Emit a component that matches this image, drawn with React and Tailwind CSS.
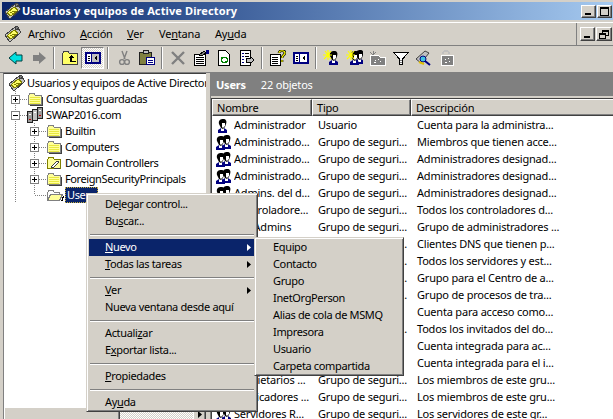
import React from 'react';

const U = ({ children }) => <span className="underline underline-offset-1">{children}</span>;

// ---- small drawn icons ----
const MmcIcon = () => (
  <svg width="18" height="16" viewBox="0 0 18 16" shapeRendering="crispEdges">
    <polygon points="1,9 11,1 13,1 17,6 7,15 5,15" fill="#c0c0c0" stroke="#404040" />
    <polygon points="3,10 10,4 14,7 7,13" fill="#ffff66" stroke="#808000" />
    <path d="M6 9h2M8 8h3M8 10h3" stroke="#808000" />
    <polygon points="11,1 13,0 15,2 12,4" fill="#808080" stroke="#404040" />
  </svg>
);

const Folder = () => (
  <svg width="16" height="14" viewBox="0 0 16 14" shapeRendering="crispEdges">
    <path d="M1.5 3.5 L3 1.5 H7 L8.5 3.5 H14.5 V12.5 H1.5 Z" fill="#ffff99" stroke="#808080" />
    <path d="M3 5h10M3 7h10M3 9h10M3 11h10" stroke="#e8e840" />
    <path d="M15.5 4.5 V13.5 H2.5" stroke="#404040" fill="none" />
  </svg>
);

const OuFolder = () => (
  <svg width="16" height="14" viewBox="0 0 16 14" shapeRendering="crispEdges">
    <path d="M1.5 3.5 L3 1.5 H7 L8.5 3.5 H14.5 V12.5 H1.5 Z" fill="#ffff99" stroke="#808000" />
    <path d="M5 11 L11 5 L13 6 L7 12 Z" fill="#ffffff" stroke="#404040" />
    <path d="M8 12h6" stroke="#404040" />
  </svg>
);

const OpenFolder = () => (
  <svg width="19" height="15" viewBox="0 0 19 15" shapeRendering="crispEdges">
    <path d="M1.5 4.5 L3 2.5 H7 L8.5 4.5 H13.5 V12.5 H1.5 Z" fill="#ffffff" stroke="#808080" />
    <path d="M1.5 12.5 L4.5 6.5 H16.5 L13.5 12.5 Z" fill="#ffff99" stroke="#808080" />
    <path d="M15 13 L17 8 L18 9 L16 14 Z" fill="#000000" />
  </svg>
);

const Domain = () => (
  <svg width="17" height="16" viewBox="0 0 17 16" shapeRendering="crispEdges">
    <rect x="10.5" y="0.5" width="5" height="11" fill="#9a9a9a" stroke="#202020" />
    <rect x="5.5" y="2.5" width="5" height="11" fill="#c0c0c0" stroke="#202020" />
    <rect x="0.5" y="4.5" width="5" height="11" fill="#9a9a9a" stroke="#202020" />
    <path d="M7 5h2M2 7h2M12 3h2" stroke="#ffffff" />
    <path d="M2 12h2M12 8h2" stroke="#c00000" />
  </svg>
);

const Head = () => (
  <g>
    <path d="M3 12 L6 10 H9 L12 12 V15 H3 Z" fill="#000080" />
    <path d="M6 10 H9 V13 H6 Z" fill="#ffffff" />
    <path d="M4 6 C3 2 6 1 8 1 C11 1 12 3 11 6 L10 9 L8 11 L6 10 Z" fill="#000000" />
    <path d="M7 5 H10 V8 L8 10 L7 9 Z" fill="#ffffff" />
  </g>
);

const UserIcon = () => (
  <svg width="16" height="16" viewBox="0 0 16 16">
    <Head />
  </svg>
);

const GroupIcon = () => (
  <svg width="17" height="16" viewBox="0 0 17 16">
    <g transform="translate(5 -1)"><Head /></g>
    <g transform="translate(-1 0)"><Head /></g>
  </svg>
);

const Star = () => (
  <path d="M2 1 L5 5 M8 1 L5 5 M0 5 H9 M1 9 L5 5 M8 9 L5 5 M5 0 V10" stroke="#ffff00" strokeWidth="1.2" />
);

const Expander = ({ minus }) => (
  <svg width="9" height="9" viewBox="0 0 9 9" shapeRendering="crispEdges" className="absolute left-[3px] top-[4px]">
    <rect x="0.5" y="0.5" width="8" height="8" fill="#ffffff" stroke="#808080" />
    <path d="M2 4.5h5" stroke="#000000" />
    {!minus && <path d="M4.5 2v5" stroke="#000000" />}
  </svg>
);

// connector cell: a branch of the dotted tree lines
const Branch = ({ box, minus, last }) => (
  <div className="relative h-4 w-[19px] shrink-0">
    <svg width="19" height="16" className="absolute left-0 top-0" shapeRendering="crispEdges">
      <path d={last ? 'M7.5 0V8M7.5 8.5H19' : 'M7.5 0V16M7.5 8.5H19'} stroke="#808080" strokeDasharray="1 1" />
    </svg>
    {box && <Expander minus={minus} />}
  </div>
);

const TreeRow = ({ indent, box, minus, last, icon, children, selected }) => (
  <div className="flex h-4 items-center whitespace-nowrap">
    {indent && (
      <div className="relative h-4 w-[19px] shrink-0">
        <svg width="19" height="16" className="absolute left-0 top-0" shapeRendering="crispEdges">
          <path d="M7.5 0V16" stroke="#808080" strokeDasharray="1 1" />
        </svg>
      </div>
    )}
    <Branch box={box} minus={minus} last={last} />
    <div className="flex w-[19px] shrink-0 items-center">{icon}</div>
    {selected ? (
      <span className="h-4 w-[33px] border border-dotted border-[#c8b040] bg-[#0a246a] pl-px leading-[14px] text-white">{children}</span>
    ) : (
      <span>{children}</span>
    )}
  </div>
);

// ---- toolbar ----
const Tool = ({ children, pressed }) => (
  <div
    className={
      pressed
        ? 'flex h-[22px] w-[23px] items-center justify-center border border-t-[#808080] border-l-[#808080] border-r-white border-b-white bg-[repeating-conic-gradient(#ffffff_0_25%,#d4d0c8_0_50%)] bg-[length:2px_2px]'
        : 'flex h-[22px] w-[23px] items-center justify-center'
    }
  >
    {children}
  </div>
);

const ToolSep = () => (
  <div className="flex h-[22px] w-2 justify-center">
    <div className="h-full w-0.5 border-l border-r border-l-[#808080] border-r-white" />
  </div>
);

const svgProps = { width: 16, height: 16, viewBox: '0 0 16 16', shapeRendering: 'crispEdges' };

const PanelIcon = ({ white }) => (
  <svg {...svgProps} width="18" viewBox="0 0 18 16">
    <rect x="1" y="2" width="16" height="12" fill="#000080" />
    <rect x="3" y="4" width="4" height="8" fill="#ffffff" />
    <rect x="8" y="4" width="7" height="8" fill={white ? '#ffffff' : '#c0c0c0'} />
    <polygon points="13,5 13,11 10,8" fill="#000000" />
    <path d="M4 6h2M4 8h2M4 10h2" stroke="#000000" />
  </svg>
);

const Toolbar = () => (
  <div className="flex h-6 items-center pl-1">
    <Tool>
      <svg {...svgProps} shapeRendering="auto">
        <polygon points="1,8 8,2 8,5 14,5 14,11 8,11 8,14" fill="#00e0e0" stroke="#004040" strokeWidth="1" />
      </svg>
    </Tool>
    <Tool>
      <svg {...svgProps} shapeRendering="auto">
        <polygon points="15,8 8,2 8,5 2,5 2,11 8,11 8,14" fill="#808080" />
      </svg>
    </Tool>
    <ToolSep />
    <Tool>
      <svg {...svgProps}>
        <path d="M0.5 3.5 L2 1.5 H6 L7.5 3.5 H15.5 V14.5 H0.5 Z" fill="#ffff66" stroke="#404040" />
        <path d="M6 8 L9 5 L12 8 H10 V11 H14 V12 H8 V8 Z" fill="#000000" />
      </svg>
    </Tool>
    <Tool pressed>
      <PanelIcon />
    </Tool>
    <ToolSep />
    <Tool>
      <svg {...svgProps} shapeRendering="auto">
        <path d="M6 1 L9 9 M11 1 L8 9" stroke="#808080" strokeWidth="1.4" />
        <circle cx="6" cy="12" r="2.4" fill="none" stroke="#808080" strokeWidth="1.4" />
        <circle cx="11" cy="12" r="2.4" fill="none" stroke="#808080" strokeWidth="1.4" />
      </svg>
    </Tool>
    <Tool>
      <svg {...svgProps}>
        <rect x="0.5" y="2.5" width="12" height="12" fill="#808040" stroke="#202020" />
        <rect x="4" y="0.5" width="5" height="3" fill="#c0c0c0" stroke="#202020" />
        <rect x="7.5" y="7.5" width="8" height="7" fill="#ffffff" stroke="#000080" />
        <path d="M9 10h5M9 12h5" stroke="#000080" />
      </svg>
    </Tool>
    <ToolSep />
    <Tool>
      <svg {...svgProps} shapeRendering="auto">
        <path d="M2 2 L14 14 M14 2 L2 14" stroke="#808080" strokeWidth="2.4" />
      </svg>
    </Tool>
    <Tool>
      <svg {...svgProps}>
        <rect x="1.5" y="4.5" width="11" height="11" fill="#ffffff" stroke="#000000" />
        <path d="M3 7h8M3 9h8M3 11h8M3 13h8" stroke="#000000" />
        <polygon points="6,5 11,1 13,3 9,6" fill="#808080" stroke="#000000" />
        <rect x="13" y="0" width="3" height="4" fill="#000080" />
      </svg>
    </Tool>
    <Tool>
      <svg {...svgProps}>
        <path d="M2.5 0.5 H9.5 L13.5 4.5 V15.5 H2.5 Z" fill="#ffffff" stroke="#000000" />
        <path d="M5 7 H10 V8 H11 V11 H9 M11 12 H6 V11 H5 V8 H7" fill="none" stroke="#008000" />
      </svg>
    </Tool>
    <Tool>
      <svg {...svgProps}>
        <rect x="1.5" y="0.5" width="10" height="15" fill="#ffffff" stroke="#000000" />
        <path d="M3 3h2M3 6h2M3 9h2M3 12h2" stroke="#000080" />
        <path d="M6 3h4M6 6h4" stroke="#000000" />
        <polygon points="7,8 11,8 11,6 15,10 11,14 11,12 7,12" fill="#c0c0c0" stroke="#000000" />
      </svg>
    </Tool>
    <ToolSep />
    <Tool>
      <svg {...svgProps}>
        <rect x="0.5" y="4.5" width="10" height="11" fill="#ffffff" stroke="#000000" />
        <path d="M2 7h6M2 9h6M2 11h6M2 13h6" stroke="#000000" />
        <path d="M9 3 C9 0 15 0 15 3 C15 5 12 5 12 8 M12 10v2" fill="none" stroke="#000000" strokeWidth="2.6" shapeRendering="auto" />
        <path d="M9 3 C9 0 15 0 15 3 C15 5 12 5 12 8 M12 10v2" fill="none" stroke="#ffff00" strokeWidth="1.2" shapeRendering="auto" />
      </svg>
    </Tool>
    <Tool>
      <PanelIcon white />
    </Tool>
    <ToolSep />
    <Tool>
      <svg width="17" height="16" viewBox="0 0 17 16">
        <g transform="translate(3 0)"><Head /></g>
        <Star />
      </svg>
    </Tool>
    <Tool>
      <svg width="17" height="16" viewBox="0 0 17 16">
        <g transform="translate(6 -1)"><Head /></g>
        <g transform="translate(1 0)"><Head /></g>
        <Star />
      </svg>
    </Tool>
    <Tool>
      <svg {...svgProps} width="18" viewBox="0 0 18 16">
        <path d="M1 5 H9 L11 7 H16 V15 H1 Z" fill="#808080" stroke="#ffffff" />
        <path d="M4 1 V5 M1 2 L4 5 M7 2 L4 5" stroke="#808080" />
        <path d="M6 10h1M9 9h1M11 11h1M5 12h2" stroke="#ffffff" />
      </svg>
    </Tool>
    <Tool>
      <svg {...svgProps}>
        <polygon points="0.5,2.5 15.5,2.5 9.5,9 9.5,14.5 6.5,14.5 6.5,9" fill="#ffffff" stroke="#000000" />
        <path d="M7 10h2M7 12h2" stroke="#808080" />
      </svg>
    </Tool>
    <Tool>
      <svg {...svgProps} shapeRendering="auto">
        <polygon points="0,9 9,1 13,3 5,13" fill="#c0c0c0" stroke="#404040" />
        <circle cx="7" cy="9" r="3" fill="#40c0e0" stroke="#000080" />
        <path d="M9 11 L14 15" stroke="#000080" strokeWidth="2" />
        <path d="M3 12 L8 14" stroke="#e0c000" strokeWidth="2" />
      </svg>
    </Tool>
    <Tool>
      <svg {...svgProps}>
        <path d="M4 4 C4 0 10 0 10 4" fill="none" stroke="#c0c0c0" strokeWidth="1.5" />
        <rect x="2" y="5" width="12" height="10" fill="#808080" stroke="#ffffff" />
        <path d="M6 9h1M9 8h1M6 12h2M10 11h1" stroke="#ffffff" />
      </svg>
    </Tool>
  </div>
);

// ---- window chrome ----
const bevel = 'border border-t-white border-l-white border-r-[#404040] border-b-[#404040] bg-[#d4d0c8] shadow-[inset_-1px_-1px_0_#808080]';

const WinBtn = ({ children, w = 'w-[15px]', h = 'h-[13px]' }) => (
  <div className={`relative ${w} ${h} ${bevel}`}>{children}</div>
);

const MenuLabel = ({ w, children }) => <div className={`${w} shrink-0`}>{children}</div>;

// ---- list data ----
const rows = [
  ['Administrador', 'Usuario', 'Cuenta para la administra...'],
  ['Administrado...', 'Grupo de seguri...', 'Miembros que tienen acce...'],
  ['Administrado...', 'Grupo de seguri...', 'Administradores designad...'],
  ['Administrado...', 'Grupo de seguri...', 'Administradores designad...'],
  ['Admins. del d...', 'Grupo de seguri...', 'Administradores designad...'],
  ['Controladore...', 'Grupo de seguri...', 'Todos los controladores d...'],
  ['DnsAdmins', 'Grupo de seguri...', 'Grupo de administradores ...'],
  ['DnsUpdatePr...', 'Grupo de seguri...', 'Clientes DNS que tienen p...'],
  ['Equipos del d...', 'Grupo de seguri...', 'Todos los servidores y est...'],
  ['HelpServices...', 'Grupo de seguri...', 'Grupo para el Centro de a...'],
  ['IIS_WPG', 'Grupo de seguri...', 'Grupo de procesos de tra...'],
  ['Invitado', 'Usuario', 'Cuenta para acceso como...'],
  ['Invitados del...', 'Grupo de seguri...', 'Todos los invitados del do...'],
  ['IUSR_SWAP', 'Usuario', 'Cuenta integrada para ac...'],
  ['IWAM_SWAP', 'Usuario', 'Cuenta integrada para el i...'],
  ['Propietarios ...', 'Grupo de seguri...', 'Los miembros de este gru...'],
  ['Publicadores ...', 'Grupo de seguri...', 'Los miembros de este gru...'],
  ['Servidores R...', 'Grupo de seguri...', 'Los servidores de este gr...'],
];

const Col = ({ w, children }) => (
  <div className={`${w} h-[17px] shrink-0 ${bevel} pl-1 leading-[15px]`}>{children}</div>
);

// ---- context menus ----
const Item = ({ children, active, arrow }) => (
  <div className={`relative flex h-[17px] items-center whitespace-nowrap pl-4 ${active ? 'bg-[#0a246a] text-white' : ''}`}>
    <span>{children}</span>
    {arrow && (
      <svg width="4" height="7" viewBox="0 0 4 7" className="absolute right-[4px] top-[5px]">
        <polygon points="0,0 4,3.5 0,7" fill={active ? '#ffffff' : '#000000'} />
      </svg>
    )}
  </div>
);

const Sep = () => (
  <div className="flex h-[9px] items-center px-px">
    <div className="h-0.5 w-full border-b border-t border-t-[#808080] border-b-white" />
  </div>
);

const menuBox =
  'absolute z-10 border border-t-[#d4d0c8] border-l-[#d4d0c8] border-r-[#404040] border-b-[#404040] bg-[#d4d0c8] text-black tracking-[-0.35px] shadow-[inset_1px_1px_0_#ffffff,inset_-1px_-1px_0_#808080]';

const App = () => (
  <div className="relative h-[419px] w-[613px] overflow-hidden bg-[#d4d0c8] font-['Noto_Sans',sans-serif] text-[11px] tracking-[-0.2px] text-black">
    {/* title bar */}
    <div className="ml-0.5 flex h-[18px] translate-y-0.5 items-center bg-gradient-to-r from-[#0a246a] to-[#a6caf0] pl-[2px]">
      <MmcIcon />
      <span className="font-bold tracking-[0.01em] text-white">Usuarios y equipos de Active Directory</span>
      <div className="ml-auto flex gap-px pr-px">
        <WinBtn>
          <div className="absolute bottom-[2px] left-[3px] h-0.5 w-1.5 bg-black" />
        </WinBtn>
        <WinBtn>
          <div className="absolute left-[2px] top-[1px] h-[9px] w-[9px] border border-t-2 border-black" />
        </WinBtn>
      </div>
    </div>

    {/* menu bar */}
    <div className="mt-1 flex h-6 items-center border-t border-b border-t-white border-b-[#808080] pl-1">
      <MmcIcon />
      <div className="ml-[6px] flex">
        <MenuLabel w="w-[52px]">Ar<U>c</U>hivo</MenuLabel>
        <MenuLabel w="w-[47px]"><U>A</U>cción</MenuLabel>
        <MenuLabel w="w-[32px]"><U>V</U>er</MenuLabel>
        <MenuLabel w="w-[56px]">Ve<U>n</U>tana</MenuLabel>
        <MenuLabel w="w-[40px]">Ay<U>u</U>da</MenuLabel>
      </div>
      <div className="ml-auto flex h-full items-center gap-px border-l border-l-[#808080] pl-[3px] pr-px">
        <WinBtn w="w-[15px]" h="h-[14px]">
          <div className="absolute bottom-[2px] left-[3px] h-0.5 w-1.5 bg-black" />
        </WinBtn>
        <WinBtn w="w-[16px]" h="h-[14px]">
          <div className="absolute left-[5px] top-[2px] h-[6px] w-[7px] border border-t-2 border-black" />
          <div className="absolute left-[2px] top-[5px] h-[6px] w-[7px] border border-t-2 border-black bg-[#d4d0c8]" />
        </WinBtn>
      </div>
    </div>

    <Toolbar />

    {/* panes */}
    <div className="mt-[2px] flex h-[347px] border-t border-t-[#808080]">
      {/* tree */}
      <div className="ml-[3px] flex w-[203px] shrink-0 flex-col overflow-hidden border-l border-t border-l-[#808080] border-t-[#404040] bg-white">
        <div className="flex-1 overflow-hidden pl-[4px] pt-px tracking-[-0.4px]">
          <div className="flex h-4 items-center whitespace-nowrap tracking-[-0.3px]">
            <div className="w-[19px] shrink-0"><MmcIcon /></div>
            <span>Usuarios y equipos de Active Directory</span>
          </div>
          <TreeRow box icon={<Folder />}>Consultas guardadas</TreeRow>
          <TreeRow box minus icon={<Domain />}>SWAP2016.com</TreeRow>
          <TreeRow indent box icon={<Folder />}>Builtin</TreeRow>
          <TreeRow indent box icon={<Folder />}>Computers</TreeRow>
          <TreeRow indent box icon={<OuFolder />}>Domain Controllers</TreeRow>
          <TreeRow indent box icon={<Folder />}>ForeignSecurityPrincipals</TreeRow>
          <TreeRow indent last icon={<OpenFolder />} selected>Users</TreeRow>
        </div>
        <div className="flex h-3 shrink-0 bg-[repeating-conic-gradient(#ffffff_0_25%,#d4d0c8_0_50%)] bg-[length:2px_2px]">
          <div className={`h-[14px] w-[116px] ${bevel}`} />
          <div className={`ml-auto flex h-[14px] w-[13px] items-center justify-center ${bevel}`}>
            <svg width="4" height="7" viewBox="0 0 4 7"><polygon points="0,0 4,3.5 0,7" fill="#000000" /></svg>
          </div>
        </div>
      </div>

      {/* list */}
      <div className="ml-[4px] min-w-0 flex-1 overflow-hidden border-l border-l-[#808080]">
        <div className="flex h-[23px] items-center bg-[#808080] pl-[5px] pt-px text-white">
          <span className="font-bold">Users</span>
          <span className="ml-[15px]">22 objetos</span>
        </div>
        <div className="mt-[2px] h-full border-l border-t border-l-[#404040] border-t-[#404040] bg-white">
          <div className="mb-px flex">
            <Col w="w-[100px]">Nombre</Col>
            <Col w="w-[99px]">Tipo</Col>
            <Col w="w-[205px]">Descripción</Col>
          </div>
          {rows.map((r, i) => (
            <div key={i} className="flex h-[17px] items-center whitespace-nowrap">
              <div className="flex w-[22px] shrink-0 justify-end pr-[3px]">
                {r[1] === 'Usuario' ? <UserIcon /> : <GroupIcon />}
              </div>
              <div className="w-[84px] shrink-0 overflow-hidden">{r[0]}</div>
              <div className="w-[99px] shrink-0">{r[1]}</div>
              <div>{r[2]}</div>
            </div>
          ))}
        </div>
      </div>
    </div>

    {/* context menu */}
    <div className={`${menuBox} left-[86px] top-[193px] w-[172px] px-[2px] pt-[2px]`}>
      <Item>De<U>l</U>egar control...</Item>
      <Item>Bu<U>s</U>car...</Item>
      <Sep />
      <Item active arrow><U>N</U>uevo</Item>
      <Item arrow><U>T</U>odas las tareas</Item>
      <Sep />
      <Item arrow><U>V</U>er</Item>
      <Item>Nueva ventana desde aquí</Item>
      <Sep />
      <Item>Actuali<U>z</U>ar</Item>
      <Item>E<U>x</U>portar lista...</Item>
      <Sep />
      <Item><U>P</U>ropiedades</Item>
      <Sep />
      <Item>Ay<U>u</U>da</Item>
    </div>

    {/* submenu */}
    <div className={`${menuBox} left-[254px] top-[237px] z-20 w-[150px] px-[2px] pt-[1px]`}>
      {['Equipo', 'Contacto', 'Grupo', 'InetOrgPerson', 'Alias de cola de MSMQ', 'Impresora', 'Usuario', 'Carpeta compartida'].map((t) => (
        <Item key={t}>{t}</Item>
      ))}
    </div>
  </div>
);

export default App;
